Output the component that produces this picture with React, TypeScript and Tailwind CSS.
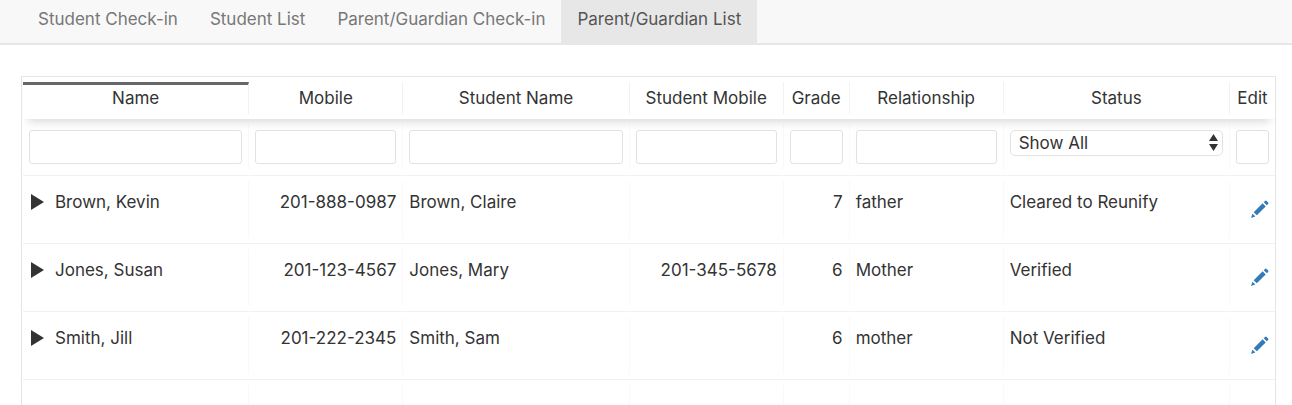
import { useState } from 'react';
import clsx from 'clsx';

type Guardian = {
  name: string;
  mobile: string;
  studentName: string;
  studentMobile: string;
  grade: string;
  relationship: string;
  status: string;
};

const tabs = ['Student Check-in', 'Student List', 'Parent/Guardian Check-in', 'Parent/Guardian List'];

const columns = [
  { label: 'Name', width: '' },
  { label: 'Mobile', width: 'w-[154px]' },
  { label: 'Student Name', width: '' },
  { label: 'Student Mobile', width: 'w-[154px]' },
  { label: 'Grade', width: 'w-[66px]' },
  { label: 'Relationship', width: 'w-[154px]' },
  { label: 'Status', width: '' },
  { label: 'Edit', width: 'w-[45px]' },
];

const guardians: Guardian[] = [
  { name: 'Brown, Kevin', mobile: '201-888-0987', studentName: 'Brown, Claire', studentMobile: '', grade: '7', relationship: 'father', status: 'Cleared to Reunify' },
  { name: 'Jones, Susan', mobile: '201-123-4567', studentName: 'Jones, Mary', studentMobile: '201-345-5678', grade: '6', relationship: 'Mother', status: 'Verified' },
  { name: 'Smith, Jill', mobile: '201-222-2345', studentName: 'Smith, Sam', studentMobile: '', grade: '6', relationship: 'mother', status: 'Not Verified' },
];

const PencilIcon = () => (
  <svg viewBox="0 0 18 18" className="size-[18px]" fill="currentColor" aria-hidden="true">
    <path d="M0 18 1.5 13.7 4.3 16.5Z" />
    <path d="M2.7 12.2 11.6 3.3 14.7 6.4 5.8 15.3Z" />
    <path d="M12.7 2.2 14 .9Q14.8.1 15.6.9L17.1 2.4Q17.9 3.2 17.1 4L15.8 5.3Z" />
  </svg>
);

const BodyCell = ({ children, right, last }: { children?: React.ReactNode; right?: boolean; last?: boolean }) => (
  <td className="border-b border-[#f2f2f2] px-0 py-[5px] align-top">
    <div
      className={clsx(
        'h-[57px] px-1.5 pt-[9px] leading-6 whitespace-nowrap',
        right && 'text-right',
        !last && 'border-r border-[#f9f9f9]'
      )}
    >
      {children}
    </div>
  </td>
);

const App = () => {
  const [active, setActive] = useState('Parent/Guardian List');

  return (
    <div className="flex h-screen flex-col overflow-hidden bg-white font-['Inter',sans-serif] text-[17px] text-[#333]">
      <nav className="flex border-b-2 border-[#e7e7e7] bg-[#f8f8f8] pl-[22px]">
        {tabs.map((tab) => (
          <button
            key={tab}
            type="button"
            onClick={() => setActive(tab)}
            className={clsx(
              'h-[43px] px-4 pb-1.5 leading-6',
              tab === active ? 'bg-[#e7e7e7] text-[#555]' : 'text-[#777]'
            )}
          >
            {tab}
          </button>
        ))}
      </nav>

      <main className="mt-[31px] mr-4 ml-[21px] min-h-0 flex-1 overflow-hidden border-x border-t border-[#e5e5e5] pl-px">
        <table className="w-full table-fixed border-separate border-spacing-0">
          <thead className="relative shadow-[0_8px_10px_-5px_rgba(0,0,0,0.15)]">
            <tr>
              {columns.map((col, i) => (
                <th key={col.label} scope="col" className={clsx('px-0 py-[5px] font-normal', col.width)}>
                  <div
                    className={clsx(
                      'h-8 text-center leading-6 whitespace-nowrap',
                      i === 0 ? 'border-t-3 border-t-[#666] pt-px' : 'pt-1',
                      i < columns.length - 1 && 'border-r border-r-[#f2f2f2]'
                    )}
                  >
                    {col.label}
                  </div>
                </th>
              ))}
            </tr>
          </thead>
          <tbody>
            <tr>
              {columns.map((col, i) => (
                <td key={col.label} className="border-b border-[#f2f2f2] px-0 py-[5px]">
                  <div className={clsx('h-[46px] px-1.5 pt-1.5', i < columns.length - 1 && 'border-r border-[#f9f9f9]')}>
                    {col.label === 'Status' ? (
                      <div className="relative">
                        <select
                          aria-label="Filter Status"
                          className="block h-[26px] w-full appearance-none rounded-[5px] border border-[#e2e2e2] bg-white px-2"
                        >
                          <option>Show All</option>
                          <option>Verified</option>
                          <option>Not Verified</option>
                          <option>Cleared to Reunify</option>
                        </select>
                        <svg
                          viewBox="0 0 9 17"
                          className="pointer-events-none absolute top-1 right-[5px] h-[17px] w-[9px]"
                          fill="#333"
                          aria-hidden="true"
                        >
                          <path d="M4.5 0 9 7H0ZM0 10H9L4.5 17Z" />
                        </svg>
                      </div>
                    ) : (
                      <input
                        type="text"
                        aria-label={`Filter ${col.label}`}
                        className="block h-[34px] w-full rounded-[3px] border border-[#e2e2e2] bg-white px-2"
                      />
                    )}
                  </div>
                </td>
              ))}
            </tr>
            {guardians.map((g) => (
              <tr key={g.name}>
                <BodyCell>
                  <div className="flex items-center">
                    <button type="button" aria-label={`Expand ${g.name}`} className="mr-[11px] ml-0.5">
                      <svg viewBox="0 0 13 16" className="h-4 w-[13px]" fill="#333" aria-hidden="true">
                        <path d="M0 0 13 8 0 16Z" />
                      </svg>
                    </button>
                    {g.name}
                  </div>
                </BodyCell>
                <BodyCell right>{g.mobile}</BodyCell>
                <BodyCell>{g.studentName}</BodyCell>
                <BodyCell right>{g.studentMobile}</BodyCell>
                <BodyCell right>{g.grade}</BodyCell>
                <BodyCell>{g.relationship}</BodyCell>
                <BodyCell>{g.status}</BodyCell>
                <BodyCell last>
                  <a href="#edit" aria-label={`Edit ${g.name}`} className="flex justify-end pt-2.5 text-[#337ab7]">
                    <PencilIcon />
                  </a>
                </BodyCell>
              </tr>
            ))}
            <tr>
              {columns.map((col, i) => (
                <BodyCell key={col.label} last={i === columns.length - 1} />
              ))}
            </tr>
          </tbody>
        </table>
      </main>
    </div>
  );
};

export default App;
